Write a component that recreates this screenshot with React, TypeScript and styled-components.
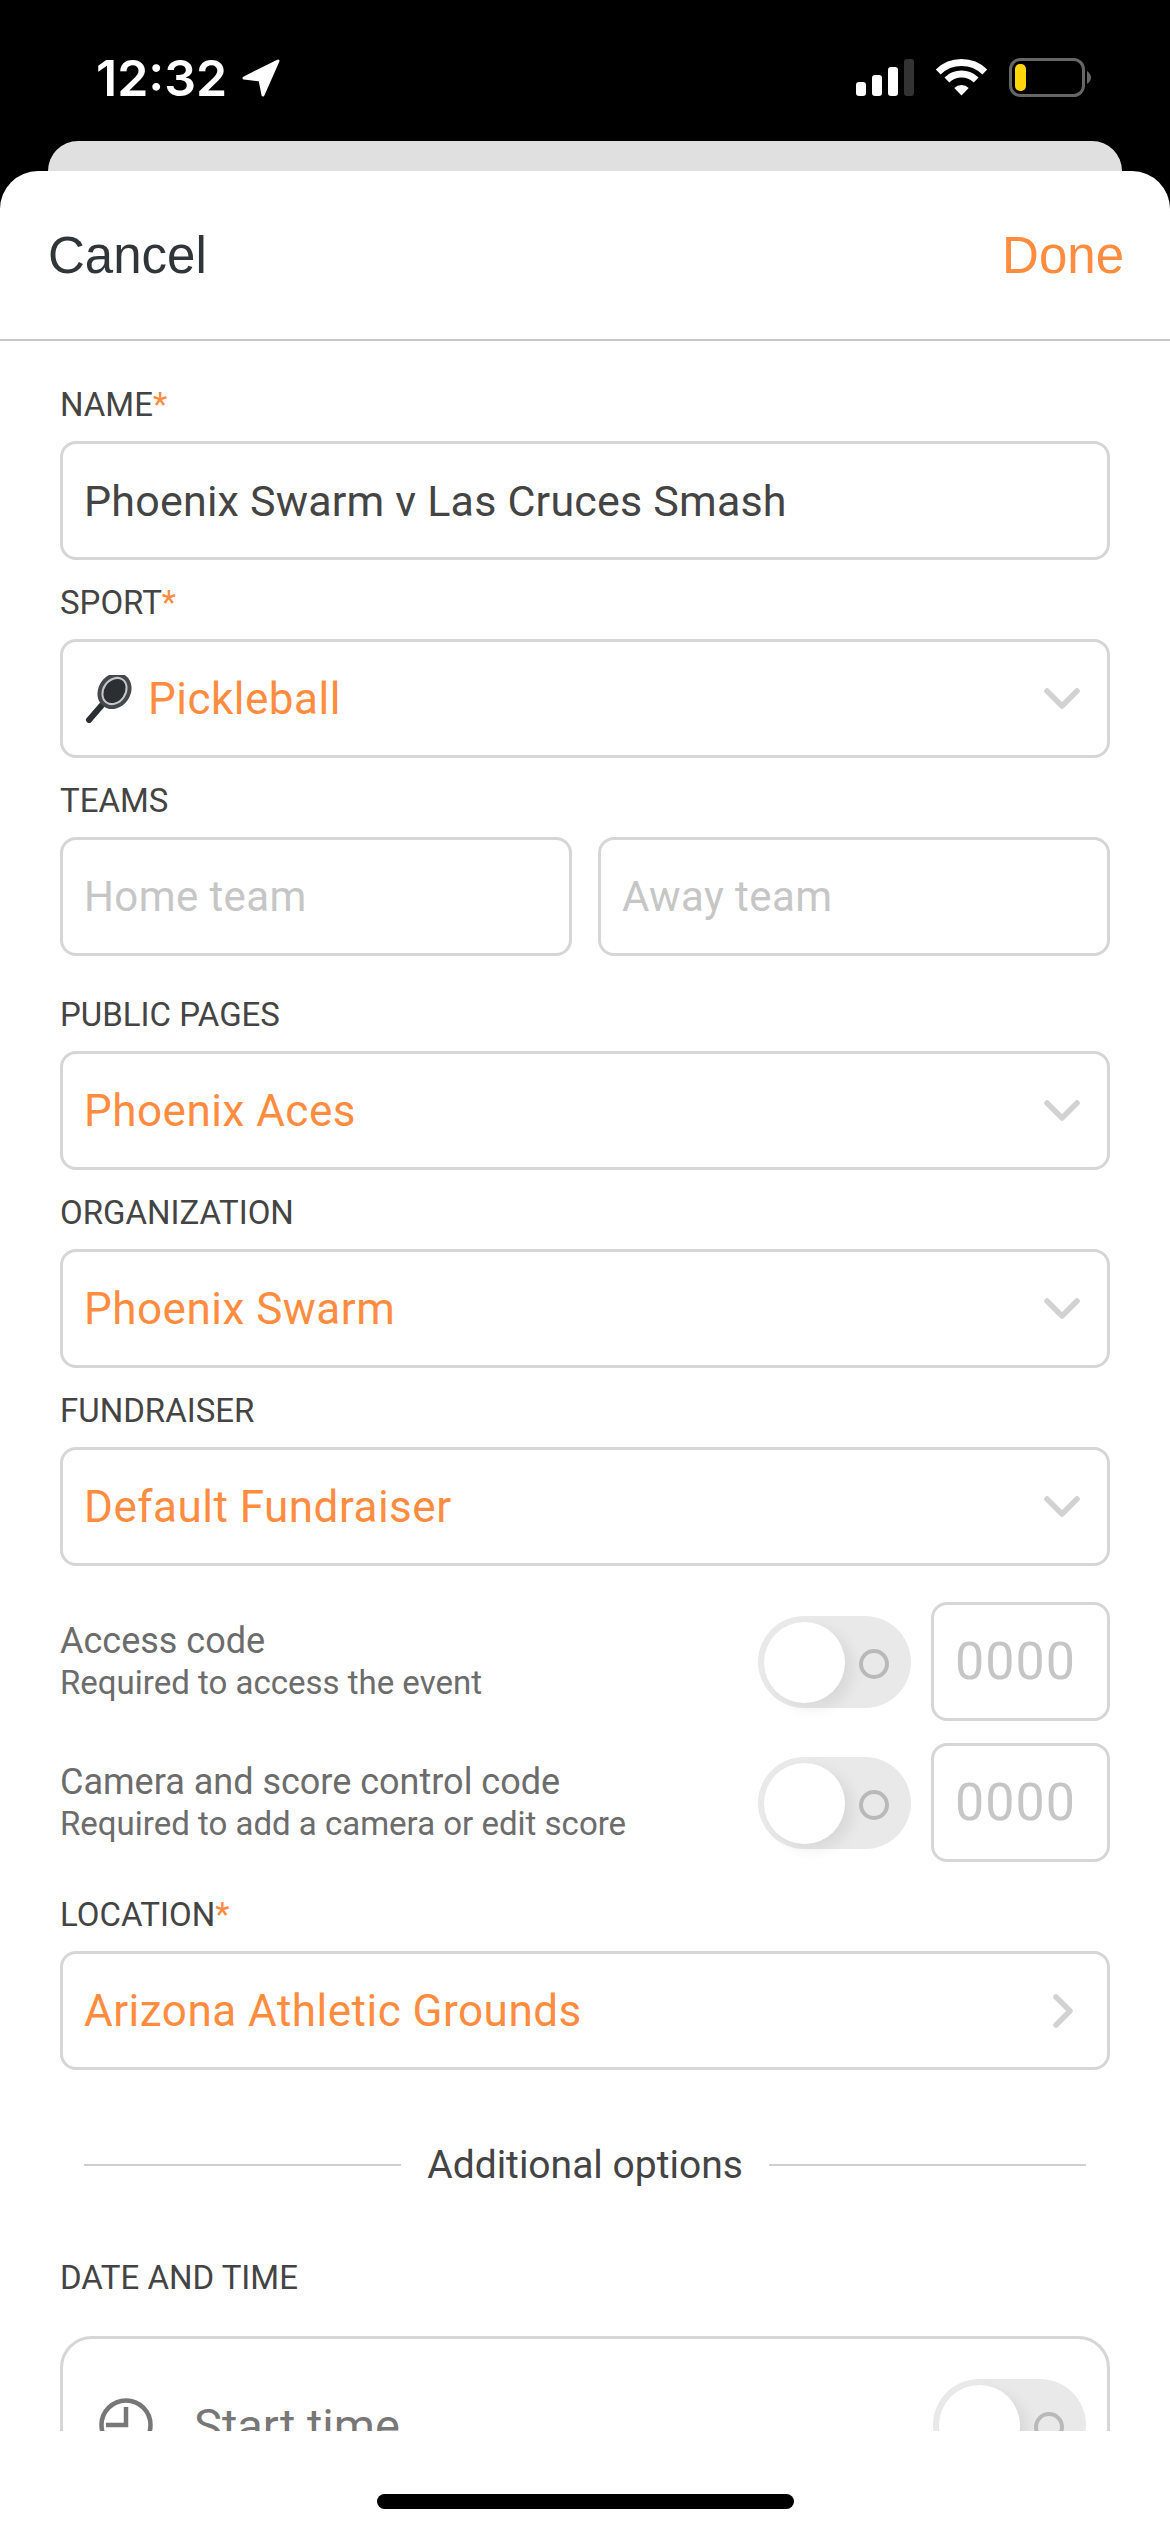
import * as React from "react";
import styled, { createGlobalStyle } from "styled-components";

const orange = "#ff8c3f";
const line = "#d6d6d6";

const Global = createGlobalStyle`
  html, body { margin: 0; padding: 0; background: #fff; }
  * { box-sizing: border-box; }
  body { font-family: Roboto, "Liberation Sans", sans-serif; }
`;

const Screen = styled.div`
  width: 1170px;
  height: 2532px;
  display: flex;
  flex-direction: column;
  background: #000;
  overflow: hidden;
`;

const StatusBar = styled.div`
  height: 141px;
  flex: none;
  display: flex;
  align-items: flex-start;
  justify-content: space-between;
  padding: 58px 78px 0 96px;
`;

const Clock = styled.div`
  display: flex;
  align-items: center;
  gap: 14px;
  color: #fff;
  font-family: Inter, "Liberation Sans", sans-serif;
  font-size: 50px;
  font-weight: 600;
  line-height: 40px;
`;

const BackCard = styled.div`
  height: 30px;
  flex: none;
  margin: 0 48px;
  background: #e0e0e0;
  border-radius: 30px 30px 0 0;
`;

const Sheet = styled.div`
  flex: 1;
  min-height: 0;
  display: flex;
  flex-direction: column;
  background: #fff;
  border-radius: 38px 38px 0 0;
`;

const Header = styled.div`
  height: 170px;
  flex: none;
  display: flex;
  align-items: center;
  justify-content: space-between;
  padding: 0 46px 0 48px;
  border-bottom: 2px solid #c8c8c8;
  font-family: "Liberation Sans", sans-serif;
  font-size: 51px;
`;

const HeaderButton = styled.span<{ $accent?: boolean }>`
  color: ${(p) => (p.$accent ? orange : "#30353a")};
`;

const Body = styled.div`
  height: 2090px;
  flex: none;
  overflow: hidden;
  padding: 46px 60px 0;
`;

const Field = styled.div<{ $gap?: number }>`
  margin-bottom: ${(p) => p.$gap ?? 25}px;
`;

const Label = styled.div`
  height: 36px;
  margin-bottom: 18px;
  line-height: 36px;
  font-size: 33px;
  color: #444;
`;

const SectionLabel = styled(Label)`
  margin-top: 75px;
  margin-bottom: 40px;
`;

const Star = styled.span`
  color: ${orange};
`;

const Box = styled.div`
  height: 119px;
  display: flex;
  align-items: center;
  gap: 16px;
  padding: 0 21px;
  border: 3px solid ${line};
  border-radius: 16px;
`;

const Value = styled.span<{ $tone?: "dark" | "accent" | "hint" }>`
  flex: 1;
  font-size: ${(p) => (p.$tone === "accent" ? 44 : p.$tone === "hint" ? 42 : 43)}px;
  letter-spacing: ${(p) => (p.$tone === "accent" ? 0.5 : p.$tone === "hint" ? 0.4 : 0.2)}px;
  color: ${(p) =>
    p.$tone === "accent" ? orange : p.$tone === "hint" ? "#c6c6c6" : "#444"};
`;

const Teams = styled.div`
  display: grid;
  grid-template-columns: 1fr 1fr;
  gap: 26px;
`;

const CodeRow = styled.div<{ $gap: number }>`
  height: 119px;
  margin-bottom: ${(p) => p.$gap}px;
  display: flex;
  align-items: center;
`;

const CodeText = styled.div`
  flex: 1;
  color: #6c6c6c;
`;

const CodeTitle = styled.div`
  font-size: 36px;
  line-height: 42px;
`;

const CodeHint = styled.div`
  font-size: 33px;
  line-height: 42px;
`;

const Toggle = styled.div`
  width: 153px;
  height: 92px;
  flex: none;
  position: relative;
  margin-right: 20px;
  border-radius: 46px;
  background: #e9e9e9;
`;

const Knob = styled.div`
  position: absolute;
  left: 6px;
  top: 6px;
  width: 81px;
  height: 81px;
  border-radius: 50%;
  background: #fff;
  box-shadow: 8px 6px 14px rgba(0, 0, 0, 0.07);
`;

const OffMark = styled.div`
  position: absolute;
  left: 101px;
  top: 33px;
  width: 30px;
  height: 30px;
  border-radius: 50%;
  border: 4px solid #b9b9b9;
`;

const CodeBox = styled(Box)`
  width: 179px;
  flex: none;
`;

const CodeValue = styled.span`
  font-size: 52px;
  letter-spacing: 1px;
  color: #c6c6c6;
`;

const Divider = styled.div`
  height: 40px;
  margin: 75px 24px 0;
  display: flex;
  align-items: center;
  gap: 26px;
  color: #444;
  font-size: 39px;
  &::before,
  &::after {
    content: "";
    flex: 1;
    height: 2px;
    background: #d0d0d0;
  }
`;

const DateCard = styled.div`
  height: 178px;
  display: flex;
  align-items: center;
  gap: 41px;
  padding: 0 21px 0 36px;
  border: 3px solid ${line};
  border-radius: 32px;
  color: #777;
  font-size: 47px;
`;

const CardToggle = styled(Toggle)`
  margin: 0;
`;

const Grow = styled.span`
  flex: 1;
`;

const Footer = styled.div`
  flex: 1;
  display: flex;
  justify-content: center;
  padding-top: 63px;
`;

const HomeBar = styled.div`
  width: 417px;
  height: 15px;
  border-radius: 8px;
  background: #000;
`;

const ChevronSvg = styled.svg<{ $end: number }>`
  flex: none;
  margin-right: ${(p) => p.$end}px;
`;

const Chevron = () => (
  <ChevronSvg $end={6} width="36" height="22" viewBox="0 0 36 22" fill="none">
    <path d="M3 3 L18 18 L33 3" stroke="#d2d2d2" strokeWidth="5.500" strokeLinecap="round" strokeLinejoin="round" />
  </ChevronSvg>
);

const ChevronRight = () => (
  <ChevronSvg $end={13} width="20" height="34" viewBox="0 0 20 34" fill="none">
    <path d="M3 3 L17 17 L3 31" stroke="#d2d2d2" strokeWidth="5.500" strokeLinecap="round" strokeLinejoin="round" />
  </ChevronSvg>
);

const Racket = () => (
  <svg width="48" height="48" viewBox="-2 0 48 48">
    <path d="M3 45 L16 30" stroke="#2b2f33" strokeWidth="6" strokeLinecap="round" />
    <ellipse cx="28.500" cy="16" rx="19" ry="16" transform="rotate(-55 28.500 16)" fill="#44484c" />
    <ellipse cx="28.500" cy="16" rx="14" ry="11" transform="rotate(-55 28.500 16)" fill="#2b2f33" stroke="#c4c6c8" strokeWidth="2" />
  </svg>
);

const LocationArrow = () => (
  <svg width="40" height="40" viewBox="0 0 40 40">
    <path
      d="M37 3 L22 37 L19 22 L3 20 Z"
      fill="#fff"
      stroke="#fff"
      strokeWidth="3"
      strokeLinejoin="round"
    />
  </svg>
);

const StatusIcons = () => (
  <svg width="236" height="40" viewBox="0 0 236 40">
    <rect x="0" y="24" width="10" height="14" rx="3" fill="#fff" />
    <rect x="16" y="17" width="10" height="21" rx="3" fill="#fff" />
    <rect x="32" y="9" width="10" height="29" rx="3" fill="#fff" />
    <rect x="48" y="1" width="10" height="37" rx="3" fill="#333" />
    <path d="M82.200 13.900 A33.500 33.500 0 0 1 128.800 13.900" stroke="#fff" strokeWidth="7" fill="none" />
    <path d="M90.900 21.900 A21 21 0 0 1 120.100 21.900" stroke="#fff" strokeWidth="7" fill="none" />
    <path d="M105.500 37.500 L98.300 30 A10 10 0 0 1 112.700 30 Z" fill="#fff" />
    <rect x="154.500" y="1.500" width="73" height="36" rx="10" fill="none" stroke="#666" strokeWidth="3" />
    <rect x="159" y="6" width="11" height="27" rx="5" fill="#ffd60a" />
    <path d="M231 13 Q235 16 235 19.500 Q235 23 231 26 Z" fill="#666" />
  </svg>
);

const ClockIcon = () => (
  <svg width="54" height="54" viewBox="0 0 54 54" fill="none" stroke="#777" strokeWidth="4.500">
    <circle cx="27" cy="27" r="24.500" />
    <path d="M27 9 V27 H7" />
  </svg>
);

const Switch = () => (
  <>
    <Knob />
    <OffMark />
  </>
);

export default function App() {
  return (
    <Screen>
      <Global />
      <StatusBar>
        <Clock>
          12:32
          <LocationArrow />
        </Clock>
        <StatusIcons />
      </StatusBar>
      <BackCard />
      <Sheet>
        <Header>
          <HeaderButton>Cancel</HeaderButton>
          <HeaderButton $accent>Done</HeaderButton>
        </Header>
        <Body>
          <Field>
            <Label>
              NAME<Star>*</Star>
            </Label>
            <Box>
              <Value>Phoenix Swarm v Las Cruces Smash</Value>
            </Box>
          </Field>
          <Field>
            <Label>
              SPORT<Star>*</Star>
            </Label>
            <Box>
              <Racket />
              <Value $tone="accent">Pickleball</Value>
              <Chevron />
            </Box>
          </Field>
          <Field $gap={41}>
            <Label>TEAMS</Label>
            <Teams>
              <Box>
                <Value $tone="hint">Home team</Value>
              </Box>
              <Box>
                <Value $tone="hint">Away team</Value>
              </Box>
            </Teams>
          </Field>
          <Field>
            <Label>PUBLIC PAGES</Label>
            <Box>
              <Value $tone="accent">Phoenix Aces</Value>
              <Chevron />
            </Box>
          </Field>
          <Field>
            <Label>ORGANIZATION</Label>
            <Box>
              <Value $tone="accent">Phoenix Swarm</Value>
              <Chevron />
            </Box>
          </Field>
          <Field $gap={36}>
            <Label>FUNDRAISER</Label>
            <Box>
              <Value $tone="accent">Default Fundraiser</Value>
              <Chevron />
            </Box>
          </Field>
          <CodeRow $gap={22}>
            <CodeText>
              <CodeTitle>Access code</CodeTitle>
              <CodeHint>Required to access the event</CodeHint>
            </CodeText>
            <Toggle>
              <Switch />
            </Toggle>
            <CodeBox>
              <CodeValue>0000</CodeValue>
            </CodeBox>
          </CodeRow>
          <CodeRow $gap={35}>
            <CodeText>
              <CodeTitle>Camera and score control code</CodeTitle>
              <CodeHint>Required to add a camera or edit score</CodeHint>
            </CodeText>
            <Toggle>
              <Switch />
            </Toggle>
            <CodeBox>
              <CodeValue>0000</CodeValue>
            </CodeBox>
          </CodeRow>
          <Field $gap={0}>
            <Label>
              LOCATION<Star>*</Star>
            </Label>
            <Box>
              <Value $tone="accent">Arizona Athletic Grounds</Value>
              <ChevronRight />
            </Box>
          </Field>
          <Divider>Additional options</Divider>
          <SectionLabel>DATE AND TIME</SectionLabel>
          <DateCard>
            <ClockIcon />
            <Grow>Start time</Grow>
            <CardToggle>
              <Switch />
            </CardToggle>
          </DateCard>
        </Body>
        <Footer>
          <HomeBar />
        </Footer>
      </Sheet>
    </Screen>
  );
}
